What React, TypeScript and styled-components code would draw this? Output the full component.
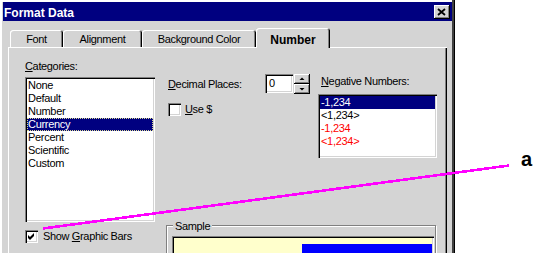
import styled, { createGlobalStyle } from "styled-components";

const GlobalStyle = createGlobalStyle`
  body {
    margin: 0;
    background: #ffffff;
    font-family: "Liberation Sans", Arial, sans-serif;
  }
`;

const face = "#d4d4d4";

const Stage = styled.div`
  position: relative;
  width: 557px;
  height: 255px;
  overflow: hidden;
`;

const Window = styled.div`
  width: 455px;
  height: 253px;
  box-sizing: border-box;
  padding: 2px 3px 0;
  background: ${face};
  box-shadow: inset -1px 0 0 #000, inset -3px 0 0 #404040, inset 2px 2px 0 #fff;
  display: flex;
  flex-direction: column;
  overflow: hidden;
`;

const TitleBar = styled.div`
  height: 19px;
  flex-shrink: 0;
  background: #000080;
  display: flex;
  align-items: flex-start;
  justify-content: space-between;
  padding: 0 2px 0 1px;
`;

const Title = styled.span`
  color: #fff;
  font-weight: bold;
  font-size: 12px;
  line-height: 14px;
  margin-top: 4px;
`;

const CloseButton = styled.div`
  width: 16px;
  height: 14px;
  margin-top: 3px;
  background: ${face};
  box-shadow: inset -1px -1px 0 #000, inset 1px 1px 0 #fff, inset -2px -2px 0 #808080;
  display: flex;
`;

const TabRow = styled.div`
  display: flex;
  align-items: flex-end;
  height: 19px;
  flex-shrink: 0;
  margin: 7px 0 0 7px;
`;

const Tab = styled.div<{ $active?: boolean; $w: number }>`
  position: relative;
  z-index: ${(p) => (p.$active ? 1 : 0)};
  width: ${(p) => p.$w}px;
  height: ${(p) => (p.$active ? 20 : 17)}px;
  margin-bottom: ${(p) => (p.$active ? -1 : 0)}px;
  box-sizing: border-box;
  padding-top: ${(p) => (p.$active ? 5 : 3)}px;
  background: ${face};
  border-radius: 3px 3px 0 0;
  box-shadow: inset 1px 1px 0 #fff, inset -1px 0 0 #000, inset -2px 0 0 #808080;
  text-align: center;
  font-size: ${(p) => (p.$active ? 12 : 11)}px;
  font-weight: ${(p) => (p.$active ? "bold" : "normal")};
  letter-spacing: ${(p) => (p.$active ? 0 : -0.35)}px;
  line-height: ${(p) => (p.$active ? 14 : 13)}px;
  white-space: nowrap;
`;

const Panel = styled.div`
  flex: 1;
  flex-shrink: 0;
  min-height: 240px;
  margin: 0 5px;
  background: ${face};
  box-shadow: inset 1px 1px 0 #fff, inset -1px -1px 0 #000, inset -2px -2px 0 #808080;
  padding: 13px 10px 0 17px;
  display: grid;
  grid-template-columns: 130px 1fr;
  column-gap: 13px;
  align-content: start;
  align-items: start;
`;

const Label = styled.div<{ $indent?: number; $gap?: number }>`
  font-size: 11px;
  line-height: 13px;
  letter-spacing: -0.35px;
  color: #000;
  white-space: nowrap;
  padding-left: ${(p) => p.$indent ?? 0}px;
  margin-bottom: ${(p) => p.$gap ?? 0}px;
`;

const ListBox = styled.div<{ $h: number }>`
  height: ${(p) => p.$h}px;
  box-sizing: border-box;
  padding: 2px;
  background: #fff;
  box-shadow: inset 1px 1px 0 #808080, inset 2px 2px 0 #000, inset -1px -1px 0 #fff,
    inset -2px -2px 0 ${face};
`;

const ListItem = styled.div<{ $selected?: boolean; $focus?: boolean; $color?: string }>`
  height: 13px;
  line-height: 13px;
  padding-left: 1px;
  font-size: 11px;
  letter-spacing: -0.3px;
  white-space: nowrap;
  background: ${(p) => (p.$selected ? "#000080" : "transparent")};
  color: ${(p) => (p.$selected ? "#fff" : p.$color ?? "#000")};
  outline: ${(p) => (p.$focus ? "1px dotted #d8d890" : "none")};
  outline-offset: -1px;
`;

const Controls = styled.div`
  display: flex;
  gap: 8px;
`;

const DecimalCol = styled.div`
  width: 142px;
  margin-top: 14px;
`;

const DecimalRow = styled.div`
  display: flex;
  align-items: center;
  height: 20px;
`;

const DecLabel = styled(Label)`
  width: 97px;
`;

const SpinInput = styled.div`
  width: 28px;
  height: 19px;
  align-self: flex-start;
  box-sizing: border-box;
  padding: 3px 0 0 4px;
  background: #fff;
  font-size: 11px;
  line-height: 13px;
  box-shadow: inset 1px 1px 0 #808080, inset 2px 2px 0 #000, inset -1px -1px 0 #fff,
    inset -2px -2px 0 ${face};
`;

const SpinButtons = styled.div`
  width: 16px;
  height: 20px;
  margin-left: 1px;
  display: flex;
  flex-direction: column;
`;

const SpinButton = styled.div`
  height: 10px;
  background: ${face};
  box-shadow: inset -1px -1px 0 #000, inset 1px 1px 0 #fff, inset -2px -2px 0 #808080;
  display: flex;
`;

const CheckRow = styled.div<{ $top: number; $gap: number }>`
  display: flex;
  align-items: center;
  gap: ${(p) => p.$gap}px;
  margin-top: ${(p) => p.$top}px;
`;

const CheckBox = styled.div`
  width: 13px;
  height: 13px;
  flex-shrink: 0;
  box-sizing: border-box;
  background: #fff;
  box-shadow: inset 1px 1px 0 #808080, inset 2px 2px 0 #000, inset -1px -1px 0 #fff,
    inset -2px -2px 0 ${face};
  display: flex;
  align-items: center;
  justify-content: center;
`;

const NegCol = styled.div`
  width: 119px;
  margin-top: 15px;
`;

const GroupBox = styled.div`
  position: relative;
  width: 270px;
  height: 40px;
  box-sizing: border-box;
  margin: 3px 0 0 -2px;
  padding: 10px 1px 0 5px;
  border: 1px solid #808080;
  box-shadow: 1px 1px 0 #fff, inset 1px 1px 0 #fff;
`;

const GroupLabel = styled(Label)`
  position: absolute;
  top: -6px;
  left: 6px;
  padding: 0 2px;
  background: ${face};
`;

const SampleBox = styled.div`
  height: 40px;
  box-sizing: border-box;
  padding: 8px 2px 0;
  background: #ffffcc;
  box-shadow: inset 1px 1px 0 #808080, inset 2px 2px 0 #000, inset -1px -1px 0 #fff,
    inset -2px -2px 0 ${face};
  display: flex;
  justify-content: flex-end;
  align-items: flex-start;
`;

const Bar = styled.div`
  width: 130px;
  height: 24px;
  background: #0000ff;
`;

const Overlay = styled.svg`
  position: absolute;
  left: 0;
  top: 0;
  pointer-events: none;
`;

const Callout = styled.span`
  position: absolute;
  left: 521px;
  top: 149px;
  font-size: 20px;
  line-height: 20px;
  font-weight: bold;
  color: #000;
`;

const categories = ["None", "Default", "Number", "Currency", "Percent", "Scientific", "Custom"];

const negatives = [
  { text: "-1,234", color: "#000" },
  { text: "<1,234>", color: "#000" },
  { text: "-1,234", color: "#ff0000" },
  { text: "<1,234>", color: "#ff0000" },
];

const tabs = [
  { name: "Font", w: 53 },
  { name: "Alignment", w: 79 },
  { name: "Background Color", w: 114 },
  { name: "Number", w: 74, active: true },
];

function Check() {
  return (
    <svg width="9" height="9" viewBox="0 0 9 9">
      <polygon points="1,3 3,5 7,1 7,4 3,8 1,6" fill="#000" />
    </svg>
  );
}

export default function App() {
  return (
    <Stage>
      <GlobalStyle />
      <Window>
        <TitleBar>
          <Title>Format Data</Title>
          <CloseButton>
            <svg width="16" height="14" viewBox="0 0 16 14">
              <path d="M4 4 L11 10 M11 4 L4 10" stroke="#000" strokeWidth="1.8" />
            </svg>
          </CloseButton>
        </TitleBar>

        <TabRow>
          {tabs.map((t) => (
            <Tab key={t.name} $w={t.w} $active={t.active}>
              {t.name}
            </Tab>
          ))}
        </TabRow>

        <Panel>
          <div>
            <Label $gap={4}>
              <u>C</u>ategories:
            </Label>
            <ListBox $h={145}>
              {categories.map((c) => (
                <ListItem key={c} $selected={c === "Currency"} $focus={c === "Currency"}>
                  {c}
                </ListItem>
              ))}
            </ListBox>
          </div>

          <Controls>
            <DecimalCol>
              <DecimalRow>
                <DecLabel>
                  <u>D</u>ecimal Places:
                </DecLabel>
                <SpinInput>0</SpinInput>
                <SpinButtons>
                  <SpinButton>
                    <svg width="16" height="10" viewBox="0 0 16 10">
                      <polygon points="5.5,6 10.5,6 8,3.5" fill="#000" />
                    </svg>
                  </SpinButton>
                  <SpinButton>
                    <svg width="16" height="10" viewBox="0 0 16 10">
                      <polygon points="5.5,4 10.5,4 8,6.5" fill="#000" />
                    </svg>
                  </SpinButton>
                </SpinButtons>
              </DecimalRow>
              <CheckRow $top={9} $gap={4}>
                <CheckBox />
                <Label>
                  <u>U</u>se $
                </Label>
              </CheckRow>
            </DecimalCol>

            <NegCol>
              <Label $indent={3} $gap={6}>
                <u>N</u>egative Numbers:
              </Label>
              <ListBox $h={64}>
                {negatives.map((n, i) => (
                  <ListItem key={i} $selected={i === 0} $color={n.color}>
                    {n.text}
                  </ListItem>
                ))}
              </ListBox>
            </NegCol>
          </Controls>

          <CheckRow $top={8} $gap={5}>
            <CheckBox>
              <Check />
            </CheckBox>
            <Label>
              Show <u>G</u>raphic Bars
            </Label>
          </CheckRow>

          <GroupBox>
            <GroupLabel>Sample</GroupLabel>
            <SampleBox>
              <Bar />
            </SampleBox>
          </GroupBox>
        </Panel>
      </Window>

      <Overlay width="557" height="255" viewBox="0 0 557 255">
        <line
          x1="43"
          y1="228.5"
          x2="509"
          y2="165.5"
          stroke="#ff00ff"
          strokeWidth="2.6"
          shapeRendering="crispEdges"
        />
      </Overlay>
      <Callout>a</Callout>
    </Stage>
  );
}
